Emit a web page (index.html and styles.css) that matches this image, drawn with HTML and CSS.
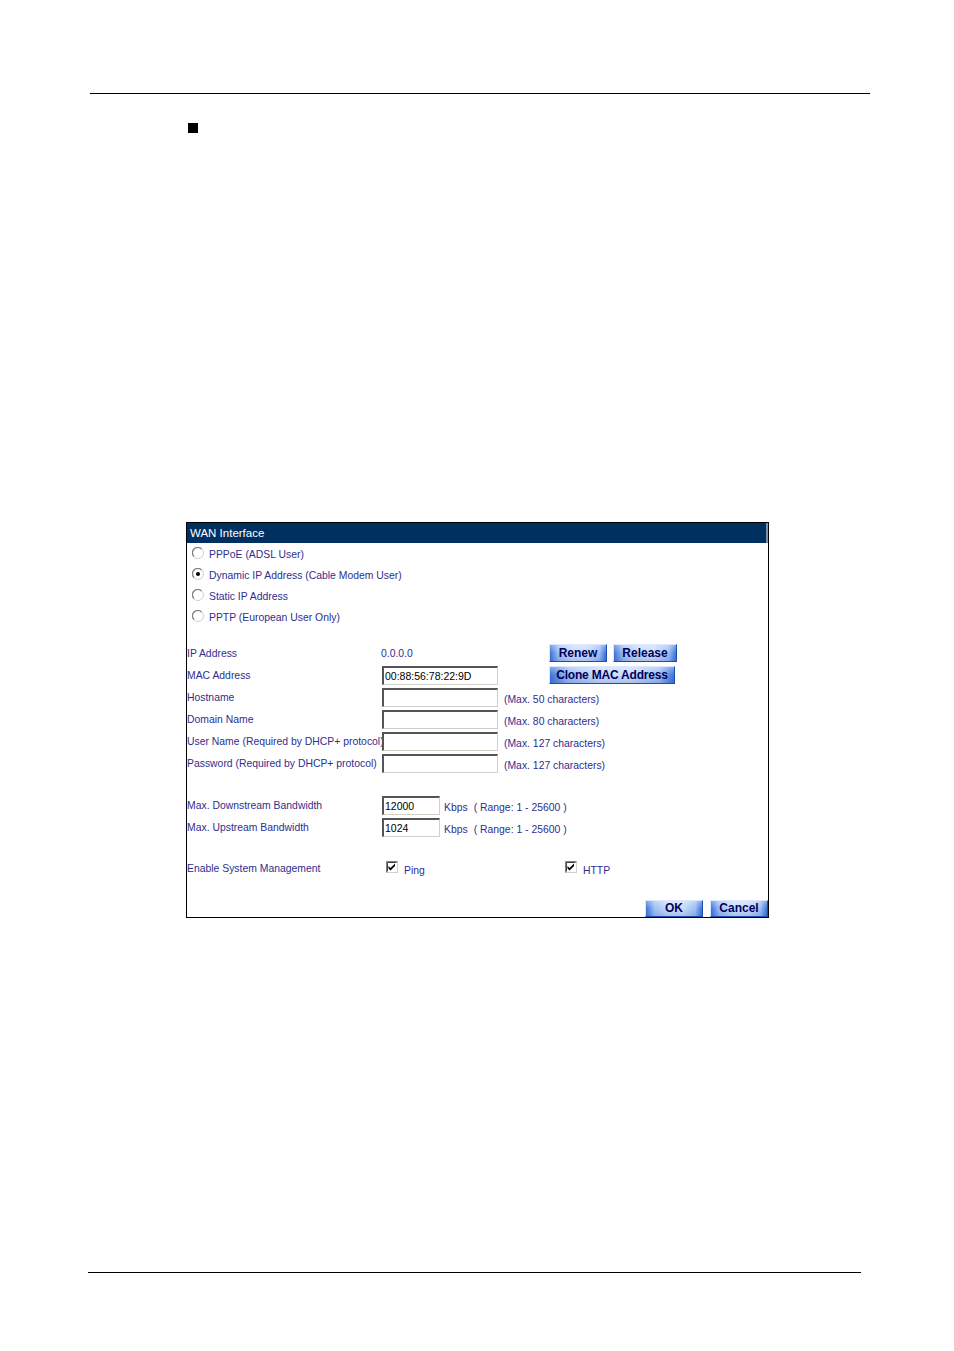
FILE: index.html
```html
<!DOCTYPE html>
<html>
<head>
<meta charset="utf-8">
<link rel="stylesheet" href="styles.css">
</head>
<body>
<div class="page">
  <div class="topline"></div>
  <div class="bullet"></div>

  <div class="panel">
    <div class="panel-head">WAN Interface</div>

    <div class="radios">
      <div class="radio-row">
        <svg class="radio" width="12" height="12" viewBox="0 0 12 12"><circle cx="6" cy="6" r="5.5" fill="#fff" stroke="#d4d0c8"/><path d="M2 9.5A5 5 0 0 1 9.5 2" fill="none" stroke="#808080" stroke-width="1.2"/></svg>
        <span>PPPoE (ADSL User)</span>
      </div>
      <div class="radio-row">
        <svg class="radio" width="12" height="12" viewBox="0 0 12 12"><circle cx="6" cy="6" r="5.5" fill="#fff" stroke="#d4d0c8"/><path d="M2 9.5A5 5 0 0 1 9.5 2" fill="none" stroke="#808080" stroke-width="1.2"/><circle cx="6" cy="6" r="2" fill="#000"/></svg>
        <span>Dynamic IP Address (Cable Modem User)</span>
      </div>
      <div class="radio-row">
        <svg class="radio" width="12" height="12" viewBox="0 0 12 12"><circle cx="6" cy="6" r="5.5" fill="#fff" stroke="#d4d0c8"/><path d="M2 9.5A5 5 0 0 1 9.5 2" fill="none" stroke="#808080" stroke-width="1.2"/></svg>
        <span>Static IP Address</span>
      </div>
      <div class="radio-row">
        <svg class="radio" width="12" height="12" viewBox="0 0 12 12"><circle cx="6" cy="6" r="5.5" fill="#fff" stroke="#d4d0c8"/><path d="M2 9.5A5 5 0 0 1 9.5 2" fill="none" stroke="#808080" stroke-width="1.2"/></svg>
        <span>PPTP (European User Only)</span>
      </div>
    </div>

    <div class="form">
      <div class="row">
        <div class="lbl">IP Address</div>
        <div class="c2 val">0.0.0.0</div>
        <div class="c3 btns"><span class="btn b-renew">Renew</span><span class="btn b-release">Release</span></div>
      </div>
      <div class="row">
        <div class="lbl">MAC Address</div>
        <div class="c2"><span class="inp wide">00:88:56:78:22:9D</span></div>
        <div class="c3 btns"><span class="btn b-clone">Clone MAC Address</span></div>
      </div>
      <div class="row">
        <div class="lbl">Hostname</div>
        <div class="c2"><span class="inp wide"></span></div>
        <div class="c3 note">(Max. 50 characters)</div>
      </div>
      <div class="row">
        <div class="lbl">Domain Name</div>
        <div class="c2"><span class="inp wide"></span></div>
        <div class="c3 note">(Max. 80 characters)</div>
      </div>
      <div class="row">
        <div class="lbl">User Name (Required by DHCP+ protocol)</div>
        <div class="c2"><span class="inp wide"></span></div>
        <div class="c3 note">(Max. 127 characters)</div>
      </div>
      <div class="row">
        <div class="lbl">Password (Required by DHCP+ protocol)</div>
        <div class="c2"><span class="inp wide"></span></div>
        <div class="c3 note">(Max. 127 characters)</div>
      </div>
    </div>

    <div class="form bw">
      <div class="row">
        <div class="lbl">Max. Downstream Bandwidth</div>
        <div class="c2 bwcell"><span class="inp narrow">12000</span><span class="kbps">Kbps</span><span class="range">( Range: 1 - 25600 )</span></div>
      </div>
      <div class="row">
        <div class="lbl">Max. Upstream Bandwidth</div>
        <div class="c2 bwcell"><span class="inp narrow">1024</span><span class="kbps">Kbps</span><span class="range">( Range: 1 - 25600 )</span></div>
      </div>
    </div>

    <div class="form mgmt">
      <div class="row">
        <div class="lbl">Enable System Management</div>
        <div class="c2 chk-cell">
          <svg class="chk" width="12" height="12" viewBox="0 0 12 12"><rect x="0.5" y="0.5" width="11" height="11" fill="#fff" stroke="#d4d0c8"/><path d="M0.5 11.5V0.5H11.5" fill="none" stroke="#808080"/><path d="M1.5 10.5V1.5H10.5" fill="none" stroke="#404040"/><path d="M2.5 5L4.5 7L9 2.5V5L4.5 9.5L2.5 7.5Z" fill="#000"/></svg>
          <span class="chk-lbl">Ping</span>
        </div>
        <div class="c4 chk-cell">
          <svg class="chk" width="12" height="12" viewBox="0 0 12 12"><rect x="0.5" y="0.5" width="11" height="11" fill="#fff" stroke="#d4d0c8"/><path d="M0.5 11.5V0.5H11.5" fill="none" stroke="#808080"/><path d="M1.5 10.5V1.5H10.5" fill="none" stroke="#404040"/><path d="M2.5 5L4.5 7L9 2.5V5L4.5 9.5L2.5 7.5Z" fill="#000"/></svg>
          <span class="chk-lbl">HTTP</span>
        </div>
      </div>
    </div>

    <div class="actions"><span class="btn b-ok">OK</span><span class="btn b-ok">Cancel</span></div>
  </div>

  <div class="bottomline"></div>
</div>
</body>
</html>
```

FILE: styles.css
```css
html, body {
  margin: 0;
  padding: 0;
  background: #fff;
}
.page {
  width: 954px;
  height: 1351px;
  position: relative;
  font-family: "Liberation Sans", Arial, sans-serif;
}
.topline {
  margin-left: 90px;
  width: 780px;
  height: 0;
  border-top: 1px solid #000;
  position: relative;
  top: 93px;
}
.bullet {
  width: 10px;
  height: 10px;
  background: #000;
  margin-left: 188px;
  margin-top: 122px;
}
.panel {
  margin-left: 186px;
  margin-top: 389px;
  width: 581px;
  height: 394px;
  border: 1px solid #000;
  display: flex;
  flex-direction: column;
  color: #2e2e8e;
  font-size: 10.4px;
}
.panel-head {
  height: 20px;
  background: #00305f;
  color: #fff;
  font-size: 11.5px;
  line-height: 20px;
  padding-left: 3px;
  border-right: 2px solid #7d93ad;
}
.radios {
  padding-top: 1px;
  display: flex;
  flex-direction: column;
}
.radio-row {
  height: 21px;
  display: flex;
  align-items: center;
  padding-left: 5px;
}
.radio {
  margin-right: 5px;
  position: relative;
  top: -2px;
}
.form {
  margin-top: 14px;
  display: flex;
  flex-direction: column;
}
.row {
  height: 22px;
  display: flex;
  align-items: center;
}
.lbl {
  width: 195px;
  white-space: nowrap;
}
.c2 {
  width: 122px;
  display: flex;
  align-items: center;
}
.val {
  margin-left: -1px;
  width: 123px;
}
.c3 {
  display: flex;
  align-items: center;
}
.note {
  position: relative;
  top: 2px;
}
.btns {
  padding-left: 45px;
  gap: 6px;
}
.inp {
  box-sizing: border-box;
  height: 19px;
  border-style: solid;
  border-width: 2px 1px 1px 2px;
  border-color: #555 #d4d0c8 #d4d0c8 #555;
  background: #fff;
  color: #000;
  font-size: 10.5px;
  line-height: 16px;
  padding-left: 1px;
  white-space: nowrap;
}
.wide { width: 116px; }
.narrow { width: 58px; }
.btn {
  box-sizing: border-box;
  height: 18px;
  font-weight: bold;
  font-size: 12px;
  line-height: 16px;
  color: #00005c;
  border: 1px solid;
  border-color: #dce8ff #1c4eb0 #1c4eb0 #dce8ff;
  background:
    linear-gradient(to bottom, rgba(255,255,255,0.35), rgba(255,255,255,0) 50%, rgba(0,40,140,0.15)),
    linear-gradient(to right, #3d74d8 0%, #9ebff4 15%, #c9dcfb 40%, #c9dcfb 65%, #9ebff4 88%, #3d74d8 100%);
  text-align: center;
  white-space: nowrap;
}
.b-renew { width: 58px; }
.b-release { width: 64px; }
.b-clone { width: 126px; letter-spacing: -0.2px; }
.bw {
  margin-top: 20px;
}
.bwcell {
  width: auto;
}
.kbps {
  margin-left: 4px;
  position: relative;
  top: 2px;
}
.range {
  margin-left: 6px;
  position: relative;
  top: 2px;
}
.mgmt {
  margin-top: 19px;
}
.chk-cell {
  display: flex;
  align-items: center;
}
.c2.chk-cell {
  width: 183px;
  padding-left: 4px;
  box-sizing: border-box;
}
.chk {
  position: relative;
  top: -1px;
}
.chk-lbl {
  margin-left: 6px;
  position: relative;
  top: 2px;
}
.actions {
  margin-top: auto;
  display: flex;
  justify-content: flex-end;
  gap: 7px;
}
.b-ok {
  width: 58px;
  height: 17px;
  line-height: 15px;
}
.bottomline {
  margin-left: 88px;
  width: 773px;
  border-top: 1px solid #000;
  margin-top: 354px;
}
```
